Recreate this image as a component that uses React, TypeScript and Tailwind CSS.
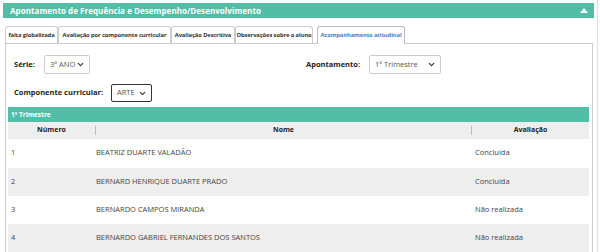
import { ChevronDown } from "lucide-react";

const TABS = [
  { label: "falta globalizada", w: "w-[53px]" },
  { label: "Avaliação por componente curricular", w: "w-[113px]" },
  { label: "Avaliação Descritiva", w: "w-[64px]" },
  { label: "Observações sobre o aluno", w: "w-[78px]" },
];

const ROWS = [
  { n: 1, nome: "BEATRIZ DUARTE VALADÃO", av: "Concluída" },
  { n: 2, nome: "BERNARD HENRIQUE DUARTE PRADO", av: "Concluída" },
  { n: 3, nome: "BERNARDO CAMPOS MIRANDA", av: "Não realizada" },
  { n: 4, nome: "BERNARDO GABRIEL FERNANDES DOS SANTOS", av: "Não realizada" },
];

function Select({ value, className, dark }: { value: string; className: string; dark?: boolean }) {
  return (
    <div
      className={`flex items-center justify-between whitespace-nowrap bg-white rounded-[2px] pl-[5px] pr-[4px] text-[7.5px] text-[#555] ${
        dark ? "border border-[#333]" : "border border-[#ccc]"
      } ${className}`}
    >
      <span>{value}</span>
      <ChevronDown className="w-[9px] h-[9px] text-[#333] shrink-0" strokeWidth={3} />
    </div>
  );
}

export default function App() {
  return (
    <div className="w-[600px] h-[252px] bg-white overflow-hidden font-['Open_Sans',sans-serif]">
      <div className="w-[598px] h-full border-r border-[#ddd] pl-[3px] pr-[3px] pt-[3px]">
        {/* header */}
        <div className="h-[15px] w-[591px] bg-[#52bea5] flex items-center justify-between pl-[7px] pr-[6px]">
          <span className="text-white text-[8px] font-bold tracking-[0.05px]">
            Apontamento de Frequência e Desempenho/Desenvolvimento
          </span>
          <svg width="8" height="5" viewBox="0 0 8 5">
            <polygon points="4,0 8,5 0,5" fill="#fff" />
          </svg>
        </div>

        {/* tabs */}
        <div className="flex items-end mt-[7px] pl-[2px] h-[18px]">
          {TABS.map((t) => (
            <div
              key={t.label}
              className={`${t.w} h-[17px] border border-b-0 border-[#ccc] rounded-t-[3px] flex items-center justify-center overflow-hidden whitespace-nowrap text-[5.8px] font-bold tracking-[-0.1px] text-[#333] bg-white`}
            >
              {t.label}
            </div>
          ))}
          <div className="ml-[4px] w-[88px] h-[18px] border border-b-0 border-[#bbb] rounded-t-[3px] flex items-center justify-center whitespace-nowrap text-[5.8px] font-bold tracking-[-0.1px] text-[#4a7cc9] bg-white relative top-[1px] z-10">
            Acompanhamento atitudinal
          </div>
        </div>

        {/* panel */}
        <div className="ml-[2px] w-[588px] h-[220px] border border-[#ccc] border-b-0 pt-[11px] px-[2px]">
          <div className="flex items-center h-[19px] pl-[6px]">
            <span className="text-[7.5px] font-bold text-[#222] w-[30px]">Série:</span>
            <Select value="3º ANO" className="w-[46px] h-[19px]" />
            <span className="ml-[216px] text-[7.5px] font-bold text-[#222] w-[63px]">Apontamento:</span>
            <Select value="1º Trimestre" className="w-[72px] h-[19px]" />
          </div>
          <div className="flex items-center h-[18px] pl-[6px] mt-[10px]">
            <span className="text-[7.5px] font-bold text-[#222] w-[97px] whitespace-nowrap">Componente curricular:</span>
            <Select value="ARTE" className="w-[41px] h-[18px]" dark />
          </div>

          {/* table */}
          <div className="mt-[5px] w-[581px]">
            <div className="h-[15px] bg-[#52bea5] flex items-center pl-[3px] text-[6.5px] font-bold text-white">
              1º Trimestre
            </div>
            <div className="h-[17px] bg-[#eeeeee] flex items-center text-[7px] font-bold text-[#222]">
              <div className="w-[87px] text-center">Número</div>
              <div className="w-[1px] h-[9px] bg-[#bbb]" />
              <div className="flex-1 text-center">Nome</div>
              <div className="w-[1px] h-[9px] bg-[#bbb]" />
              <div className="w-[117px] text-center">Avaliação</div>
            </div>
            {ROWS.map((r, i) => (
              <div
                key={r.n}
                className={`h-[28px] flex items-center text-[7.5px] text-[#444] ${i % 2 ? "bg-[#eeeeee]" : "bg-white"} ${
                  i === 1 ? "mt-[1px]" : ""
                }`}
              >
                <div className="w-[88px] pl-[3px]">{r.n}</div>
                <div className="flex-1">{r.nome}</div>
                <div className="w-[114px]">{r.av}</div>
              </div>
            ))}
          </div>
        </div>
      </div>
    </div>
  );
}
